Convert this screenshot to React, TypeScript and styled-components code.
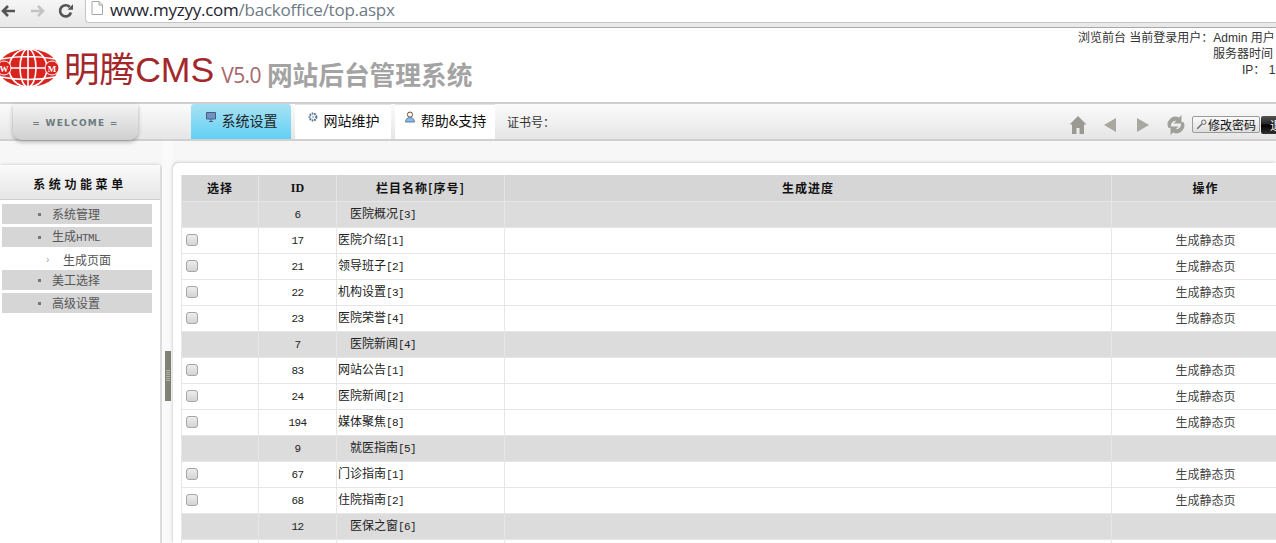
import React from "react";
import styled, { createGlobalStyle, css } from "styled-components";

const CJK = `"Noto Sans CJK SC", "Noto Sans", sans-serif`;
const MONO = `"Liberation Mono", "DejaVu Sans Mono", monospace`;

const Global = createGlobalStyle`
  html, body { margin: 0; padding: 0; background: #fff; overflow: hidden; }
  body { font-family: "Liberation Sans", ${CJK}; font-size: 12px; color: #333; }
`;

const Page = styled.div`
  width: 1276px; height: 543px; overflow: hidden; display: flex; flex-direction: column;
`;

/* browser chrome */
const BrowserBar = styled.div`
  height: 27px; flex: none; display: flex; align-items: flex-start;
  background: linear-gradient(#f6f6f6, #e8e8e8);
  border-bottom: 1px solid #a8a8a8;
`;
const NavGlyphs = styled.div`
  width: 85px; height: 21px; flex: none; display: flex; align-items: center;
`;
const Glyph = styled.svg<{ $gap?: number }>`
  width: 16px; height: 16px; flex: none; margin-left: ${p => p.$gap ?? 0}px;
`;
const AddressBox = styled.div`
  flex: 1; height: 22px; display: flex; align-items: flex-start; gap: 5px; padding-left: 3px;
  background: #fff; border-left: 1px solid #c4c4c4; border-bottom: 1px solid #c4c4c4;
  border-bottom-left-radius: 4px;
`;
const Url = styled.div`
  font: 17px/19px "Open Sans", "Liberation Sans", sans-serif; color: #6f7a86; letter-spacing: -0.25px;
  b { font-weight: 400; color: #1d2530; }
`;

/* header */
const Header = styled.header`
  height: 76px; flex: none; display: flex; justify-content: space-between; background: #fff;
  border-bottom: 2px solid #cfcfcf; box-sizing: border-box;
`;
const Logo = styled.div`
  display: flex; align-items: center; height: 48px; margin-top: 16px; margin-left: -3px;
`;
const LogoCMS = styled.div`
  margin: 3px 0 0 5px; font: 400 35.6px/44px "Liberation Sans", ${CJK}; color: #a3282b; white-space: nowrap;
`;
const LogoVersion = styled.div`
  margin: 14px 0 0 7px; font: 400 21px/30px "Open Sans", sans-serif; color: #a8666a; letter-spacing: -0.6px;
`;
const LogoTitle = styled.div`
  margin: 12px 0 0 6px; font: 700 25.7px/32px ${CJK}; color: #a3a3a3; white-space: nowrap;
`;
const UserInfo = styled.div`
  width: 198px; flex: none; padding-top: 2px; overflow: hidden; white-space: nowrap;
  font: 12px/16px "Liberation Sans", ${CJK}; color: #333;
`;
const InfoLine = styled.div<{ $indent: number }>`
  padding-left: ${p => p.$indent}px;
`;

/* nav bar */
const NavBar = styled.nav`
  height: 37px; flex: none; display: flex; position: relative;
  background: linear-gradient(#fbfbfb, #e6e6e6);
  border-bottom: 2px solid #d0d0d0; box-sizing: border-box;
`;
const Welcome = styled.div`
  width: 125px; height: 36px; margin-left: 13px; flex: none; box-sizing: border-box;
  display: flex; align-items: center; justify-content: center; padding-top: 2px;
  border-radius: 0 0 9px 9px;
  background: linear-gradient(#f4f4f4, #cfcfcf);
  box-shadow: 0 2px 4px rgba(0,0,0,.3);
  font: 700 9px/1 "DejaVu Sans", sans-serif; letter-spacing: 1.25px; color: #6c7a80;
`;
const Tabs = styled.div`
  display: flex; gap: 4px; margin-left: 53px; height: 35px;
`;
const Tab = styled.div<{ $active?: boolean; $w: number }>`
  width: ${p => p.$w}px; height: 35px; box-sizing: border-box; display: flex; align-items: flex-start;
  justify-content: center; gap: 5px; padding-top: 5px; font: 14px/20px ${CJK}; color: #111;
  white-space: nowrap; background: #fff;
  border-top: 1px solid #e4e4e4;
  ${p => p.$active && css`
    background: linear-gradient(#a8e2f5, #62d0f4); border-radius: 3px 3px 0 0; border-top: 0; color: #222; padding-top: 6px;
  `}
`;
const TabIcon = styled.svg`
  width: 12px; height: 12px; flex: none; margin-top: 1px;
`;
const Cert = styled.div`
  margin-left: 12px; padding-top: 10px; font: 12px/16px ${CJK}; color: #333;
`;
const NavTools = styled.div`
  margin-left: auto; display: flex; align-items: center; height: 37px; flex: none; width: 198px;
  padding-top: 4px; box-sizing: border-box;
`;
const ToolIcon = styled.svg<{ $ml: number }>`
  width: 20px; height: 20px; flex: none; margin-left: ${p => p.$ml}px;
`;
const PwdButton = styled.div`
  width: 68px; height: 17px; box-sizing: border-box; flex: none; margin-left: 6px;
  display: flex; align-items: center; padding-left: 3px; gap: 1px;
  background: linear-gradient(#fafafa, #dedede); border: 1px solid #9a9a9a; border-radius: 2px;
  font: 12px/15px ${CJK}; color: #111; white-space: nowrap;
`;
const DarkButton = styled.div`
  width: 30px; height: 18px; flex: none; margin-left: 1px; overflow: hidden; padding-left: 9px; box-sizing: border-box;
  background: linear-gradient(#555 0, #222 45%, #000 50%, #333 100%); border-radius: 2px;
  font: 12px/18px ${CJK}; color: #fff; white-space: nowrap;
`;

/* body */
const Body = styled.div`
  flex: 1; min-height: 0; display: flex; background: #f7f7f7;
`;
const Sidebar = styled.aside`
  width: 162px; flex: none; margin-top: 24px; box-sizing: border-box; background: #fff;
  border-right: 2px solid #dcdcdc; border-radius: 0 6px 0 0; box-shadow: 1px -1px 3px rgba(0,0,0,.12);
`;
const SideTitle = styled.div`
  height: 35px; display: flex; align-items: center; justify-content: center; box-sizing: border-box; padding-top: 3px;
  font: 700 12px/16px ${CJK}; letter-spacing: 3.6px; color: #111;
  background: linear-gradient(#fafafa, #e6e6e6); border-bottom: 1px solid #cfcfcf;
`;
const Menu = styled.div`
  padding: 4px 0 0 2px; display: flex; flex-direction: column;
`;
const MenuItem = styled.div`
  width: 150px; height: 20px; margin-bottom: 3px; display: flex; align-items: center; padding-left: 36px;
  box-sizing: border-box; background: #d6d6d6; font: 12px/20px ${CJK}; color: #555;
  &::before { content: ""; width: 3px; height: 3px; background: #777; margin-right: 11px; }
`;
const SubItem = styled.div`
  height: 20px; display: flex; align-items: center; padding-left: 44px; font: 12px/20px ${CJK}; color: #555;
  &::before { content: "›"; font: 10px/1 "Liberation Sans"; color: #aaa; width: 17px; }
`;
const Narrow = styled.span`
  font-family: ${MONO}; font-size: 11px; letter-spacing: -0.6px;
`;
const Splitter = styled.div`
  width: 11px; flex: none; display: flex; justify-content: center; background: #fafafa;
`;
const Handle = styled.div`
  width: 6px; height: 50px; margin-top: 210px; display: flex; align-items: center; justify-content: center;
  background: #7f8472;
  &::after {
    content: ""; width: 4px; height: 12px;
    background: repeating-linear-gradient(#b4b8a8 0 1px, transparent 1px 2px);
  }
`;
const Main = styled.main`
  flex: 1; min-width: 0; margin-top: 22px; padding: 12px 0 0 8px; overflow: hidden; background: #fff;
  border-radius: 6px 0 0 0; box-shadow: -1px -1px 3px rgba(0,0,0,.15);
`;
const Table = styled.table`
  table-layout: fixed; width: 1118px; border-collapse: collapse; font: 12px/16px ${CJK}; color: #333;
`;
const Row = styled.tr<{ $kind: "head" | "group" | "item" }>`
  height: 26px;
  background: ${p => (p.$kind === "head" ? "#d6d6d6" : p.$kind === "group" ? "#dcdcdc" : "#fff")};
`;
const Th = styled.th<{ $w: number }>`
  width: ${p => p.$w}px; padding: 0; box-sizing: border-box; border: 1px solid #e6e6e6; border-top: 0;
  font: 700 12px/16px ${CJK}; letter-spacing: 1px; color: #111; text-align: center;
`;
const HeadId = styled.span`
  font: 700 12px/16px "Liberation Serif", serif; letter-spacing: 0;
`;
const IdCell = styled.td`
  padding: 2px 0 0; border: 1px solid #e6e6e6; text-align: center; font: 11px/16px ${MONO}; letter-spacing: -0.6px; color: #222;
`;
const NameCell = styled.td<{ $group?: boolean }>`
  padding: 0 0 0 ${p => (p.$group ? 13 : 1)}px; border: 1px solid #e6e6e6; color: #222; white-space: nowrap;
`;
const PlainCell = styled.td`
  padding: 0; border: 1px solid #e6e6e6;
`;
const ActionCell = styled.td`
  padding: 0; border: 1px solid #e6e6e6; text-align: center; color: #444;
`;
const CheckCell = styled.td`
  padding: 0 0 0 4px; border: 1px solid #e6e6e6;
`;
const Check = styled.span`
  display: block; width: 12px; height: 12px; box-sizing: border-box; border: 1px solid #a6a6a6; border-radius: 3px;
  background: linear-gradient(#ededed, #d4d4d4);
`;

type R = { id: number; name: string; seq: number; group?: boolean };
const rows: R[] = [
  { id: 6, name: "医院概况", seq: 3, group: true },
  { id: 17, name: "医院介绍", seq: 1 },
  { id: 21, name: "领导班子", seq: 2 },
  { id: 22, name: "机构设置", seq: 3 },
  { id: 23, name: "医院荣誉", seq: 4 },
  { id: 7, name: "医院新闻", seq: 4, group: true },
  { id: 83, name: "网站公告", seq: 1 },
  { id: 24, name: "医院新闻", seq: 2 },
  { id: 194, name: "媒体聚焦", seq: 8 },
  { id: 9, name: "就医指南", seq: 5, group: true },
  { id: 67, name: "门诊指南", seq: 1 },
  { id: 68, name: "住院指南", seq: 2 },
  { id: 12, name: "医保之窗", seq: 6, group: true },
  { id: 0, name: "", seq: 0 },
];

const Globe = () => (
  <svg width="62" height="40" viewBox="0 0 62 40">
    <ellipse cx="31" cy="20" rx="30" ry="19" fill="#d8231f" />
    <g fill="none" stroke="#fff" strokeWidth="1.6">
      <ellipse cx="31" cy="20" rx="8" ry="19" />
      <ellipse cx="31" cy="20" rx="19" ry="19" />
      <path d="M4 11q27 -5 54 0M1 20h60M4 29q27 5 54 0M31 1v38" />
    </g>
    <circle cx="7" cy="20" r="7" fill="#d8231f" stroke="#fff" />
    <circle cx="55" cy="20" r="7" fill="#d8231f" stroke="#fff" />
    <text x="7" y="23.5" textAnchor="middle" fontSize="9" fontWeight="700" fontFamily="Liberation Serif" fill="#fff">W</text>
    <text x="55" y="23.5" textAnchor="middle" fontSize="9" fontWeight="700" fontFamily="Liberation Serif" fill="#fff">M</text>
  </svg>
);

export default function App() {
  return (
    <Page>
      <Global />
      <BrowserBar>
        <NavGlyphs>
          <Glyph viewBox="0 0 16 16">
            <path d="M15 8H3M8 3L3 8l5 5" fill="none" stroke="#555" strokeWidth="2.6" />
          </Glyph>
          <Glyph viewBox="0 0 16 16" $gap={14}>
            <path d="M1 8h12M8 3l5 5-5 5" fill="none" stroke="#c4c4c4" strokeWidth="2.6" />
          </Glyph>
          <Glyph viewBox="0 0 16 16" $gap={12}>
            <path d="M13 9.5A5.6 5.6 0 1 1 11.8 4" fill="none" stroke="#555" strokeWidth="2.6" />
            <path d="M9.5 6.8H15V1.2z" fill="#555" />
          </Glyph>
        </NavGlyphs>
        <AddressBox>
          <Glyph viewBox="0 0 16 16">
            <path d="M3 1.5h7l3.5 3.5v9.5H3zM10 1.5V5h3.5" fill="#fff" stroke="#a5a5a5" />
          </Glyph>
          <Url><b>www.myzyy.com</b>/backoffice/top.aspx</Url>
        </AddressBox>
      </BrowserBar>

      <Header>
        <Logo>
          <Globe />
          <LogoCMS>明腾CMS</LogoCMS>
          <LogoVersion>V5.0</LogoVersion>
          <LogoTitle>网站后台管理系统</LogoTitle>
        </Logo>
        <UserInfo>
          <InfoLine $indent={0}>浏览前台 当前登录用户：Admin 用户</InfoLine>
          <InfoLine $indent={135}>服务器时间</InfoLine>
          <InfoLine $indent={164}>IP： 1</InfoLine>
        </UserInfo>
      </Header>

      <NavBar>
        <Welcome>= WELCOME =</Welcome>
        <Tabs>
          <Tab $active $w={100}>
            <TabIcon viewBox="0 0 12 12">
              <path d="M1.5 1.5h9v6.5h-9z" fill="#6d93c4" stroke="#4a5d7a" />
              <path d="M4 10.5h4M6 8v2.5" stroke="#4a5d7a" />
            </TabIcon>
            系统设置
          </Tab>
          <Tab $w={96}>
            <TabIcon viewBox="0 0 12 12">
              <circle cx="6" cy="6" r="3.4" fill="none" stroke="#55708f" strokeWidth="2" strokeDasharray="1.6 .8" />
              <circle cx="6" cy="6" r="1.2" fill="#a6c2dd" />
            </TabIcon>
            网站维护
          </Tab>
          <Tab $w={100}>
            <TabIcon viewBox="0 0 12 12">
              <circle cx="6" cy="3.6" r="2.6" fill="#fff" stroke="#7a4a2a" />
              <path d="M1.5 11c.4-3.4 2.2-4.6 4.5-4.6s4.1 1.2 4.5 4.6z" fill="#8db8e4" stroke="#5a7fa8" />
            </TabIcon>
            帮助&amp;支持
          </Tab>
        </Tabs>
        <Cert>证书号：</Cert>
        <NavTools>
          <ToolIcon viewBox="0 0 20 20" $ml={-10}>
            <path d="M10 1L1.5 9.5H4V19h4.5v-6h3v6H16V9.500h2.500z" fill="#9a9a92" />
          </ToolIcon>
          <ToolIcon viewBox="0 0 20 20" $ml={12}>
            <path d="M16 3v14L4 10z" fill="#a8a8a0" />
          </ToolIcon>
          <ToolIcon viewBox="0 0 20 20" $ml={13}>
            <path d="M4 3v14l12-7z" fill="#a8a8a0" />
          </ToolIcon>
          <ToolIcon viewBox="0 0 20 20" $ml={13}>
            <path d="M2.500 13A7.800 7.800 0 0 1 13 2.500L15.500 0V8.500H7.500l2.800-2.800A4.800 4.800 0 0 0 5.500 12.500z" fill="#a0a09a" />
            <path d="M17.500 7A7.800 7.800 0 0 1 7 17.500L4.500 20V11.500h8l-2.800 2.800A4.800 4.800 0 0 0 14.500 7.500z" fill="#a0a09a" />
          </ToolIcon>
          <PwdButton>
            <svg width="11" height="11" viewBox="0 0 11 11">
              <circle cx="7.800" cy="3.200" r="2.200" fill="none" stroke="#666" />
              <path d="M6 5L1.200 9.800" stroke="#666" strokeWidth="1.300" />
            </svg>
            修改密码
          </PwdButton>
          <DarkButton>退出</DarkButton>
        </NavTools>
      </NavBar>

      <Body>
        <Sidebar>
          <SideTitle>系统功能菜单</SideTitle>
          <Menu>
            <MenuItem>系统管理</MenuItem>
            <MenuItem><span>生成<Narrow>HTML</Narrow></span></MenuItem>
            <SubItem>生成页面</SubItem>
            <MenuItem>美工选择</MenuItem>
            <MenuItem>高级设置</MenuItem>
          </Menu>
        </Sidebar>
        <Splitter><Handle /></Splitter>
        <Main>
          <Table>
            <thead>
              <Row $kind="head">
                <Th $w={77}>选择</Th>
                <Th $w={78}><HeadId>ID</HeadId></Th>
                <Th $w={168}>栏目名称[序号]</Th>
                <Th $w={607}>生成进度</Th>
                <Th $w={188}>操作</Th>
              </Row>
            </thead>
            <tbody>
              {rows.map((r, i) => (
                <Row key={i} $kind={r.group ? "group" : "item"}>
                  {r.group ? <PlainCell /> : r.id ? <CheckCell><Check /></CheckCell> : <PlainCell />}
                  <IdCell>{r.id || ""}</IdCell>
                  <NameCell $group={r.group}>
                    {r.name}
                    {r.name && <Narrow>[{r.seq}]</Narrow>}
                  </NameCell>
                  <PlainCell />
                  <ActionCell>{r.group || !r.id ? "" : "生成静态页"}</ActionCell>
                </Row>
              ))}
            </tbody>
          </Table>
        </Main>
      </Body>
    </Page>
  );
}
